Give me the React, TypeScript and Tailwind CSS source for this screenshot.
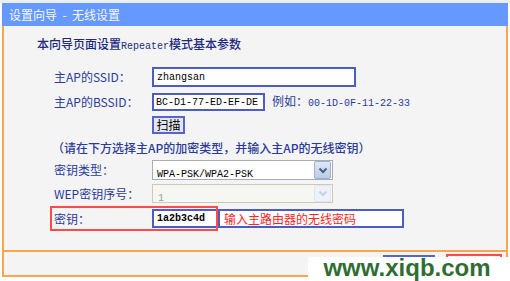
import React from "react";

const M = ({ children }: { children: React.ReactNode }) => (
  <span className="font-['Liberation_Mono',monospace] text-[10px]">{children}</span>
);

const Chevron = ({ color }: { color: string }) => (
  <svg width="10" height="7" viewBox="0 0 10 7">
    <path d="M1.5 1.5 L5 5 L8.5 1.5" fill="none" stroke={color} strokeWidth="2" />
  </svg>
);

const Label = ({ children }: { children: React.ReactNode }) => (
  <div className="w-[98px] shrink-0 text-[12px] leading-[14px] text-[#2b3a9c]">{children}</div>
);

export default function App() {
  return (
    <div className="relative w-[510px] h-[281px] bg-white overflow-hidden font-['Noto_Sans_CJK_SC',sans-serif]">
      <div className="h-[3px] bg-[#e9eef8]" />
      <div className="ml-[2px] w-[506px]">
        <div className="h-[23px] bg-[#6699ff] text-[12px] leading-[14px] pl-[7px] flex items-center whitespace-pre text-[#f4f6ff]">
          设置向导  -  无线设置
        </div>
        <div className="border-x-2 border-[#fba64c] bg-[#f4f4f4]">
          <div className="h-[226px] border-b-2 border-[#fba64c] flex flex-col pl-[33px]">
            <div className="mt-[10px] h-[16px] text-[12px] leading-[16px] font-medium text-[#1e2a80]">
              本向导页面设置<M>Repeater</M>模式基本参数
            </div>
            <div className="pl-[17px] flex flex-col">
              <div className="mt-[15px] h-[20px] flex items-center">
                <Label>主AP的SSID：</Label>
                <div className="w-[204px] h-[20px] bg-white border-2 border-[#4b5cc4] flex items-center pl-[3px] text-black">
                  <M>zhangsan</M>
                </div>
              </div>
              <div className="mt-[6px] h-[18px] flex items-center">
                <Label>主AP的BSSID：</Label>
                <div className="w-[113px] h-[18px] bg-white border-2 border-[#4b5cc4] flex items-center pl-[2px] text-black">
                  <M>BC-D1-77-ED-EF-DE</M>
                </div>
                <div className="ml-[7px] text-[12px] leading-[14px] text-[#2b3a9c]">
                  例如：<M>00-1D-0F-11-22-33</M>
                </div>
              </div>
              <div className="mt-[5px] h-[18px] flex items-center">
                <div className="w-[98px] shrink-0" />
                <div className="w-[33px] h-[18px] bg-[#e6e6f2] border-2 border-[#5565c9] flex items-center justify-center text-[12px] leading-[14px] text-black">
                  扫描
                </div>
              </div>
              <div className="mt-[6px] h-[16px] text-[12px] leading-[16px] font-medium text-[#2b3a9c] -ml-[2px]">
                （请在下方选择主AP的加密类型，并输入主AP的无线密钥）
              </div>
              <div className="mt-[4px] h-[20px] flex items-center">
                <Label>密钥类型：</Label>
                <div className="w-[181px] h-[20px] bg-white border border-[#a7acb4] flex items-center">
                  <div className="flex-1 pl-[4px] text-black">
                    <M>WPA-PSK/WPA2-PSK</M>
                  </div>
                  <div className="w-[17px] h-[18px] mr-[1px] bg-gradient-to-b from-[#dfe8f6] to-[#b9cbe6] border border-[#9db2d2] rounded-[2px] flex items-center justify-center">
                    <Chevron color="#4a5d82" />
                  </div>
                </div>
              </div>
              <div className="mt-[4px] h-[19px] flex items-center">
                <Label>WEP密钥序号：</Label>
                <div className="w-[181px] h-[19px] bg-[#f6f6f2] border border-[#ccc9bb] flex items-center">
                  <div className="flex-1 pl-[5px] text-[#a0a0a0]">
                    <M>1</M>
                  </div>
                  <div className="w-[17px] h-[17px] mr-[1px] bg-[#eef2f8] border border-[#e0e6ee] rounded-[2px] flex items-center justify-center">
                    <Chevron color="#c9d2de" />
                  </div>
                </div>
              </div>
              <div className="relative mt-[6px] h-[19px] flex items-center">
                <Label>密钥：</Label>
                <div className="w-[66px] h-[19px] bg-white border-2 border-[#4b5cc4] flex items-center pl-[3px] text-black font-bold">
                  <M>1a2b3c4d</M>
                </div>
                <div className="w-[186px] h-[19px] bg-white border-2 border-[#4b5cc4] flex items-center pl-[4px] text-[12px] leading-[14px] text-[#ff2525]">
                  输入主路由器的无线密码
                </div>
                <div className="absolute left-[-4px] top-[-3px] w-[168px] h-[25px] border-2 border-[#ff4a4a]" />
              </div>
            </div>
          </div>
          <div className="h-[25px] border-b-2 border-[#fba64c] flex items-start justify-end pr-[4px]">
            <div className="mt-[3px] w-[52px] h-[20px] border-2 border-[#5565c9] bg-[#ececf4]" />
            <div className="mt-[2px] ml-[11px] w-[56px] h-[21px] border-2 border-[#ff4a4a] p-[1px]">
              <div className="w-full h-full border border-[#5565c9] bg-[#ececf4]" />
            </div>
          </div>
        </div>
      </div>
      <div className="absolute left-[308px] top-[257px] w-[202px] h-[24px] bg-white flex items-center justify-center pr-[4px]">
        <span className="font-['Liberation_Sans',sans-serif] font-bold text-[24px] leading-[24px] text-[#2f6d33] mt-[-2px]">
          www.xiqb.com
        </span>
      </div>
    </div>
  );
}
